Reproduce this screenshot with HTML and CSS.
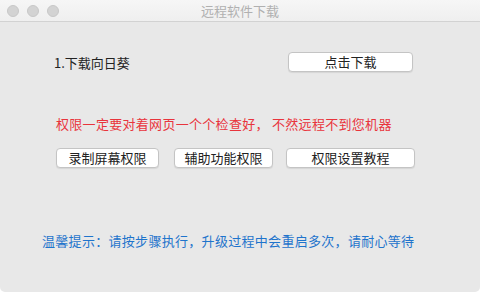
FILE: index.html
```html
<!DOCTYPE html>
<html lang="zh-CN">
<head>
    <meta charset="UTF-8">
    <title>远程软件下载</title>
    <link rel="stylesheet" href="styles.css">
</head>
<body>
    <div class="window">
        <div class="titlebar">
            <div class="lights">
                <span class="light"></span>
                <span class="light"></span>
                <span class="light"></span>
            </div>
            <div class="title">远程软件下载</div>
        </div>
        <div class="content">
            <div class="row download">
                <span class="label">1.下载向日葵</span>
                <button class="btn btn-download">点击下载</button>
            </div>
            <p class="warn">权限一定要对着网页一个个检查好，&nbsp;不然远程不到您机器</p>
            <div class="row perms">
                <button class="btn btn-screen">录制屏幕权限</button>
                <button class="btn btn-access">辅助功能权限</button>
                <button class="btn btn-guide">权限设置教程</button>
            </div>
            <p class="tip">温馨提示：请按步骤执行，升级过程中会重启多次，请耐心等待</p>
        </div>
    </div>
</body>
</html>
```

FILE: styles.css
```css
body {
    margin: 0;
    background: #fff;
    font-family: "Noto Sans CJK SC", "Liberation Sans", sans-serif;
}

.window {
    width: 480px;
    height: 292px;
    background: #e8e8e8;
    border-radius: 0 0 5px 5px;
    overflow: hidden;
    display: flex;
    flex-direction: column;
}

.titlebar {
    height: 21px;
    background: linear-gradient(#f6f6f6, #efefef);
    border-bottom: 1px solid #d2d2d2;
    display: flex;
    align-items: center;
    position: relative;
}

.lights {
    display: flex;
    gap: 8px;
    padding-left: 7px;
}

.light {
    width: 12px;
    height: 12px;
    border-radius: 50%;
    background: #d3d3d3;
    border: 0.5px solid #c8c8c8;
    box-sizing: border-box;
}

.title {
    position: absolute;
    left: 0;
    right: 0;
    text-align: center;
    font-size: 13px;
    color: #b0b0b0;
    line-height: 21px;
}

.content {
    padding: 30px 0 0 0;
}

.row {
    display: flex;
    align-items: center;
}

.label {
    margin-left: 54px;
    width: 234px;
    font-size: 13px;
    color: #222;
}

.btn {
    height: 20px;
    padding: 0;
    background: #fff;
    border: 1px solid #c4c4c4;
    border-radius: 4px;
    box-shadow: 0 1px 1px rgba(0, 0, 0, 0.08);
    font-family: inherit;
    font-size: 13px;
    color: #222;
    line-height: 18px;
}

.btn-download {
    width: 125px;
}

.warn {
    margin: 43px 0 0 56px;
    font-size: 13px;
    letter-spacing: 0.3px;
    color: #e8343c;
    line-height: 18px;
}

.perms {
    margin-top: 15px;
    padding-left: 56px;
}

.btn-screen {
    width: 103px;
}

.btn-access {
    width: 99px;
    margin-left: 15px;
}

.btn-guide {
    width: 129px;
    margin-left: 13px;
}

.tip {
    margin: 64px 0 0 42px;
    font-size: 13px;
    letter-spacing: 0.3px;
    color: #1f74cc;
    line-height: 18px;
}
```
